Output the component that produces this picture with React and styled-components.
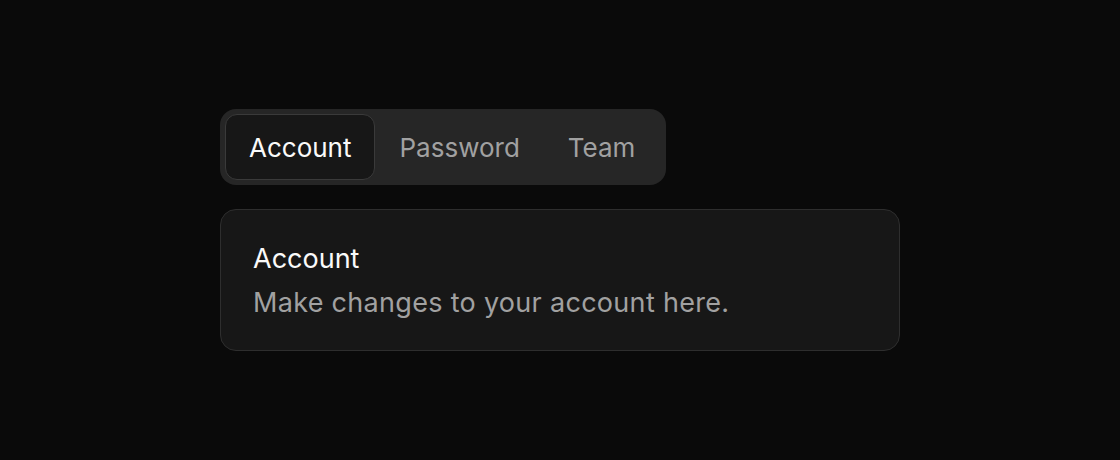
import React, { useState } from "react";
import styled, { createGlobalStyle } from "styled-components";

const Global = createGlobalStyle`
  html, body { margin: 0; padding: 0; background: #0a0a0a; }
  body { font-family: Inter, "Noto Sans", sans-serif; -webkit-font-smoothing: antialiased; }
`;

const Page = styled.div`
  width: 1120px;
  height: 460px;
  box-sizing: border-box;
  padding: 109px 220px 0 220px;
  display: flex;
  flex-direction: column;
  align-items: flex-start;
  gap: 24px;
`;

const TabList = styled.div`
  display: inline-flex;
  align-items: center;
  padding: 5px 7px 5px 5px;
  background: #262626;
  border-radius: 16px;
`;

const Tab = styled.button`
  height: 66px;
  box-sizing: border-box;
  padding: 2px 23px 0;
  border-radius: 12px;
  border: 1px solid ${(p) => (p.$active ? "#3a3a3a" : "transparent")};
  background: ${(p) => (p.$active ? "#171717" : "transparent")};
  color: ${(p) => (p.$active ? "#fafafa" : "#a1a1a1")};
  font-family: inherit;
  font-size: 26px;
  line-height: 1;
  cursor: pointer;
  display: flex;
  align-items: center;
`;

const Card = styled.div`
  width: 680px;
  box-sizing: border-box;
  background: #171717;
  border: 1px solid #2e2e2e;
  border-radius: 16px;
  padding: 31px 32px 29px;
  display: flex;
  flex-direction: column;
  gap: 8px;
`;

const Title = styled.div`
  color: #fafafa;
  font-size: 27px;
  line-height: 36px;
`;

const Description = styled.div`
  color: #a1a1a1;
  font-size: 27px;
  letter-spacing: 0.3px;
  line-height: 36px;
`;

const tabs = [
  { id: "account", label: "Account", desc: "Make changes to your account here." },
  { id: "password", label: "Password", desc: "Change your password here." },
  { id: "team", label: "Team", desc: "Manage your team here." },
];

export default function App() {
  const [active, setActive] = useState("account");
  const current = tabs.find((t) => t.id === active);
  return (
    <>
      <Global />
      <Page>
        <TabList role="tablist">
          {tabs.map((t) => (
            <Tab key={t.id} $active={t.id === active} onClick={() => setActive(t.id)}>
              {t.label}
            </Tab>
          ))}
        </TabList>
        <Card>
          <Title>{current.label}</Title>
          <Description>{current.desc}</Description>
        </Card>
      </Page>
    </>
  );
}
